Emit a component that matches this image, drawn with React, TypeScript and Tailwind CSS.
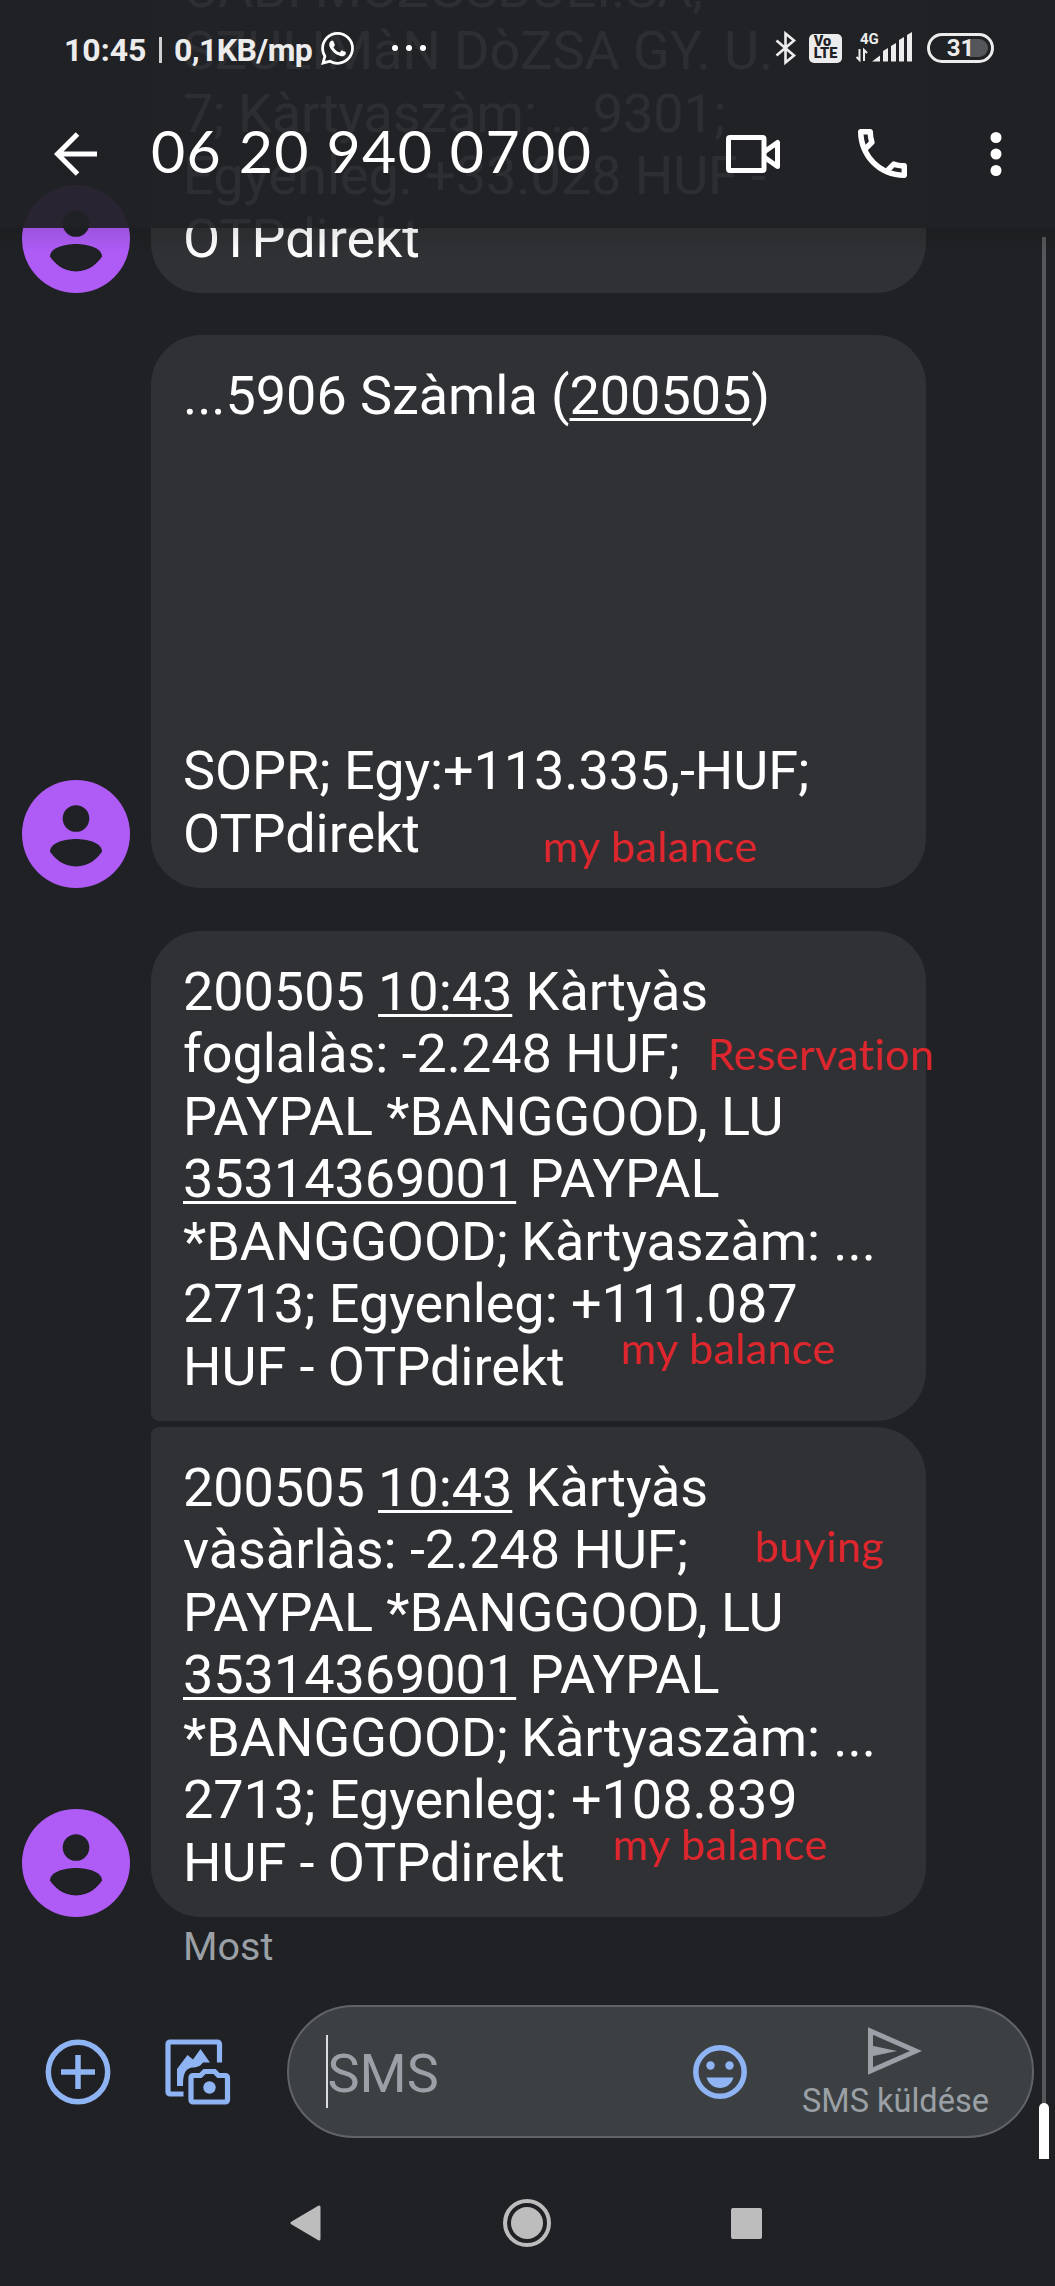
import React from "react";

function Avatar() {
  return (
    <svg viewBox="0 0 108 108" className="size-[108px] shrink-0">
      <circle cx="54" cy="54" r="54" fill="#af5cf7" />
      <circle cx="54" cy="38.5" r="13.3" fill="#202124" />
      <path d="M28 71.5C28 63 42 59 54 59s26 4 26 12.5C76 78 67 86.500 54 86.500S32 78 28 71.500z" fill="#202124" />
    </svg>
  );
}

function Link({ children }: { children: React.ReactNode }) {
  return <span className="underline decoration-[3px] underline-offset-[4px]">{children}</span>;
}

function Note({ className, children }: { className: string; children: React.ReactNode }) {
  return (
    <span className={`absolute whitespace-nowrap text-[#dd262d] font-['Lato',sans-serif] text-[43px] leading-[50px] tracking-[0.4px] ${className}`}>
      {children}
    </span>
  );
}

function Message({ avatar, shape, lines, notes }: { avatar?: boolean; shape: string; lines: React.ReactNode[]; notes?: React.ReactNode }) {
  return (
    <div className="flex items-end pl-[21.500px]">
      <div className="w-[129px] shrink-0">{avatar && <Avatar />}</div>
      <div className={`relative w-[775.500px] bg-[#303134] pt-[30px] pb-[22.5px] pl-[32.500px] text-[54px] leading-[62.5px] tracking-[-0.06px] text-white ${shape}`}>
        {lines.map((l, i) => (
          <div key={i} className="h-[62.5px] whitespace-pre">{l}</div>
        ))}
        {notes}
      </div>
    </div>
  );
}

function StatusBar() {
  return (
    <div className="flex h-[96px] items-center pl-[64px] text-[#ececec]">
      <span className="w-[85px] whitespace-nowrap pt-[3px] text-[32px] font-bold">10:45</span>
      <span className="ml-[10px] mt-[3px] h-[26px] w-[3px] bg-[#d0d0d0]" />
      <span className="ml-[12px] w-[137px] whitespace-nowrap pt-[3px] text-[32px] font-bold tracking-[-0.6px]">0,1KB/mp</span>
      <svg viewBox="0 0 24 24" className="ml-[10px] size-[33px]" fill="#fff">
        <path d="M17.472 14.382c-.297-.149-1.758-.867-2.030-.967-.273-.099-.471-.148-.670.150-.197.297-.767.966-.940 1.164-.173.199-.347.223-.644.075-.297-.150-1.255-.463-2.390-1.475-.883-.788-1.480-1.761-1.653-2.059-.173-.297-.018-.458.130-.606.134-.133.298-.347.446-.520.149-.174.198-.298.298-.497.099-.198.050-.371-.025-.520-.075-.149-.669-1.612-.916-2.207-.242-.579-.487-.500-.669-.510-.173-.008-.371-.010-.570-.010-.198 0-.520.074-.792.372-.272.297-1.040 1.016-1.040 2.479 0 1.462 1.065 2.875 1.213 3.074.149.198 2.096 3.200 5.077 4.487.709.306 1.262.489 1.694.625.712.227 1.360.195 1.871.118.571-.085 1.758-.719 2.006-1.413.248-.694.248-1.289.173-1.413-.074-.124-.272-.198-.570-.347m-5.421 7.403h-.004a9.870 9.870 0 01-5.031-1.378l-.361-.214-3.741.982.998-3.648-.235-.374a9.860 9.860 0 01-1.510-5.260c.001-5.450 4.436-9.884 9.888-9.884 2.640 0 5.122 1.030 6.988 2.898a9.825 9.825 0 012.893 6.994c-.003 5.450-4.437 9.884-9.885 9.884m8.413-18.297A11.815 11.815 0 0012.050 0C5.495 0 .160 5.335.157 11.892c0 2.096.547 4.142 1.588 5.945L.057 24l6.305-1.654a11.882 11.882 0 005.683 1.448h.005c6.554 0 11.890-5.335 11.893-11.893a11.821 11.821 0 00-3.480-8.413z" />
      </svg>
      <div className="ml-[38px] flex gap-[8px]">
        <i className="size-[6px] rounded-full bg-white" />
        <i className="size-[6px] rounded-full bg-white" />
        <i className="size-[6px] rounded-full bg-white" />
      </div>
      <svg viewBox="0 0 22 34" className="ml-[349px] h-[34px] w-[22px]" fill="none" stroke="currentColor" strokeWidth="2.600">
        <path d="M1.500 9.500L19 24.500L10.500 31.500V2.500L19 9.500L1.500 24.500" />
      </svg>
      <div className="ml-[12px] flex h-[29px] w-[33px] flex-col items-center justify-center rounded-[5px] bg-[#ececec] text-[14.500px] leading-[12.500px] font-black text-[#202124]">
        <span className="-ml-[6px]">Vo</span>
        <span>LTE</span>
      </div>
      <svg viewBox="0 0 58 34" className="ml-[13px] h-[34px] w-[58px]" fill="currentColor">
        <text x="5" y="12.500" fontSize="15" fontWeight="700" fontFamily="Roboto">4G</text>
        <path d="M17 30.500L25 24.500V30.500zM28 20l5-3V30.500h-5zM36 15l5-3V30.500h-5zM44 9l5-3V30.500h-5zM52 4l5-3V30.500h-5z" />
        <path d="M4.500 18v11l-3-3M9 30V19l3 3" fill="none" stroke="currentColor" strokeWidth="2" />
      </svg>
      <div className="relative ml-[14px] flex h-[30px] w-[67px] items-center justify-center rounded-full border-[3px] border-[#ececec] text-[24px] font-bold">
        <span className="absolute top-[3px] right-[3px] h-[18px] w-[19px] rounded-r-full bg-[#55565a]" />
        <span className="relative">31</span>
      </div>
    </div>
  );
}

function Header() {
  return (
    <header className="absolute inset-x-0 top-0 z-10 h-[228px] bg-[#202124]/94">
      <StatusBar />
      <div className="flex h-[115px] items-center pl-[54px]">
        <svg viewBox="0 0 44 44" className="size-[44px]" fill="none" stroke="#fff" strokeWidth="5">
          <path d="M43 22H4M23.500 2L3.500 22L23.500 42" />
        </svg>
        <span className="ml-[53px] w-[450px] whitespace-nowrap pb-[4px] font-['Lato',sans-serif] text-[59px] tracking-[1.400px] text-white">06 20 940 0700</span>
        <svg viewBox="0 0 54 38" className="ml-[125px] h-[38px] w-[54px]" fill="none" stroke="#fff" strokeWidth="5" strokeLinejoin="round">
          <rect x="2.500" y="2.500" width="35.500" height="33" rx="1.500" />
          <path d="M38 17L51.500 7.500V31.500L38 22" />
        </svg>
        <svg viewBox="3 3 18 18" className="ml-[78px] size-[49px]" fill="#fff">
          <path d="M6.540 5c.060.890.210 1.760.450 2.590l-1.200 1.200c-.410-1.200-.670-2.470-.760-3.790h1.510m9.860 12.020c.850.240 1.720.390 2.600.450v1.490c-1.320-.090-2.590-.350-3.800-.750l1.200-1.190M7.500 3H4c-.550 0-1 .450-1 1 0 9.390 7.610 17 17 17 .550 0 1-.450 1-1v-3.490c0-.550-.450-1-1-1-1.240 0-2.450-.200-3.570-.570a.840.840 0 00-.310-.050c-.260 0-.510.100-.710.290l-2.200 2.200a15.149 15.149 0 01-6.590-6.590l2.200-2.200c.280-.280.360-.670.250-1.020A11.360 11.360 0 018.500 4c0-.550-.450-1-1-1z" />
        </svg>
        <svg viewBox="0 0 12 44" className="ml-[83px] h-[44px] w-[12px]" fill="#fff">
          <circle cx="6" cy="5.500" r="5.500" />
          <circle cx="6" cy="22" r="5.500" />
          <circle cx="6" cy="38.500" r="5.500" />
        </svg>
      </div>
      <div className="absolute inset-x-0 top-full h-[26px] bg-linear-to-b from-black/10 to-transparent" />
    </header>
  );
}

function Composer() {
  return (
    <div className="flex h-[135px] items-center">
      <svg viewBox="0 0 66 66" className="ml-[44.500px] size-[66px]" fill="none" stroke="#8fb4f3" strokeWidth="5.500">
        <circle cx="33" cy="33" r="29.700" />
        <path d="M33 16V50M16 33H50" />
      </svg>
      <svg viewBox="0 0 66 66" className="ml-[54px] size-[66px]" fill="none" stroke="#8fb4f3" strokeWidth="5.200">
        <path d="M54.500 23.500V5a2 2 0 0 0-2-2H5a2 2 0 0 0-2 2V53a2 2 0 0 0 2 2H18.500" />
        <path d="M12 47V30L22.500 16L28 20.500L35.500 10L45 23.500H38C36 26 34 28.500 27 28.500C20 30 18 35 18 47z" fill="#8fb4f3" stroke="none" />
        <path d="M28 36.500H35.500L39.500 32.500H49.500L53.500 36.500H60.500a2 2 0 0 1 2 2V61a2 2 0 0 1-2 2H28a2 2 0 0 1-2-2V38.500a2 2 0 0 1 2-2z" />
        <circle cx="44.500" cy="48.500" r="6.200" fill="#8fb4f3" stroke="none" />
      </svg>
      <div className="ml-[56px] flex h-[133px] w-[747px] items-center rounded-full border-2 border-[#606468] bg-[#3c4043]">
        <span className="ml-[37px] h-[73px] w-[2px] bg-[#dadce0]" />
        <span className="w-[365.500px] pt-[4px] text-[54px] text-[#9aa0a6]">SMS</span>
        <svg viewBox="0 0 54 54" className="size-[54px]" fill="#8fb4f3">
          <circle cx="27" cy="27" r="24.200" fill="none" stroke="#8fb4f3" strokeWidth="5.500" />
          <circle cx="17.500" cy="20.500" r="4.200" />
          <circle cx="36.500" cy="20.500" r="4.200" />
          <path d="M13.500 32.500H40.500C38.500 39 33 43 27 43S15.500 39 13.500 32.500z" />
        </svg>
        <div className="ml-[55px] flex flex-col items-center pt-[5px] text-[#9aa0a6]">
          <svg viewBox="0 0 54 48" className="h-[48px] w-[54px]" fill="none" stroke="currentColor" strokeWidth="5">
            <path d="M2.500 4V44L48 24z" />
            <path d="M3 18.500L29 24L3 29.500z" fill="currentColor" stroke="none" />
          </svg>
          <span className="mt-[7px] text-[32.500px] leading-[39px] whitespace-nowrap">SMS küldése</span>
        </div>
      </div>
    </div>
  );
}

function NavBar() {
  return (
    <nav className="flex h-[48px] items-center">
      <svg viewBox="0 0 32 36" className="ml-[290px] h-[36px] w-[32px]" fill="#bdbdbd" stroke="#bdbdbd" strokeWidth="3" strokeLinejoin="round">
        <path d="M2 18L29 2V34z" />
      </svg>
      <svg viewBox="0 0 48 48" className="ml-[181px] size-[48px]" fill="none" stroke="#bdbdbd" strokeWidth="4">
        <circle cx="24" cy="24" r="22" />
        <circle cx="24" cy="24" r="16" fill="#bdbdbd" stroke="none" />
      </svg>
      <div className="ml-[180px] size-[31px] rounded-[2px] bg-[#bdbdbd]" />
    </nav>
  );
}

const blank = ["", "", "", "", ""];

export default function App() {
  return (
    <div className="relative h-[2286px] w-[1055px] overflow-hidden bg-[#202124] font-['Roboto',sans-serif]">
      <Header />
      <div className="-mt-[72.500px] flex h-[2058.500px] flex-col">
        <Message
          avatar
          shape="rounded-[50px]"
          lines={["CABI MUZGSBUEI.SA,", "SZULIMàN DòZSA GY. U.", "7; Kàrtyaszàm: ...9301;", "Egyenleg: +33.028 HUF -", "OTPdirekt"]}
        />
        <div className="h-[42.500px] shrink-0" />
        <Message
          avatar
          shape="rounded-[50px]"
          lines={[<>...5906 Szàmla (<Link>200505</Link>)</>, ...blank, "SOPR; Egy:+113.335,-HUF;", "OTPdirekt"]}
          notes={<Note className="top-[486px] left-[392px]">my balance</Note>}
        />
        <div className="h-[43px] shrink-0" />
        <Message
          shape="rounded-[50px] rounded-bl-[8px]"
          lines={[
            <>200505 <Link>10:43</Link> Kàrtyàs</>,
            "foglalàs: -2.248 HUF;",
            "PAYPAL *BANGGOOD, LU",
            <><Link>35314369001</Link> PAYPAL</>,
            "*BANGGOOD; Kàrtyaszàm: ...",
            "2713; Egyenleg: +111.087",
            "HUF - OTPdirekt",
          ]}
          notes={
            <>
              <Note className="top-[98px] left-[557px]">Reservation</Note>
              <Note className="top-[392px] left-[470px]">my balance</Note>
            </>
          }
        />
        <div className="h-[6px] shrink-0" />
        <Message
          avatar
          shape="rounded-[50px] rounded-tl-[8px]"
          lines={[
            <>200505 <Link>10:43</Link> Kàrtyàs</>,
            "vàsàrlàs: -2.248 HUF;",
            "PAYPAL *BANGGOOD, LU",
            <><Link>35314369001</Link> PAYPAL</>,
            "*BANGGOOD; Kàrtyaszàm: ...",
            "2713; Egyenleg: +108.839",
            "HUF - OTPdirekt",
          ]}
          notes={
            <>
              <Note className="top-[94px] left-[604px]">buying</Note>
              <Note className="top-[392px] left-[462px]">my balance</Note>
            </>
          }
        />
        <span className="mt-[7px] pl-[183px] text-[39.500px] leading-[46px] text-[#9aa0a6]">Most</span>
      </div>
      <div className="pt-[18px]">
        <Composer />
      </div>
      <div className="pt-[60px]">
        <NavBar />
      </div>
      <div className="absolute top-[237px] right-[9px] h-[1866px] w-[4px] bg-[#56575a]" />
      <div className="absolute top-[2103px] right-[6px] h-[56px] w-[10px] rounded-t-full bg-white" />
    </div>
  );
}
